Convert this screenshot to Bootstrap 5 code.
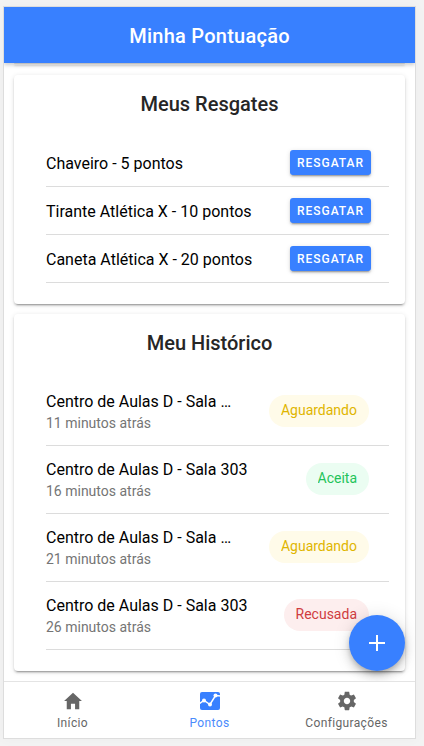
<!DOCTYPE html>
<html lang="pt-BR">
<head>
<meta charset="utf-8">
<meta name="viewport" content="width=device-width, initial-scale=1">
<title>Minha Pontuação</title>
<link href="https://cdn.jsdelivr.net/npm/bootstrap@5.3.0/dist/css/bootstrap.min.css" rel="stylesheet">
<style>
  :root { --brand: #3880ff; }
  body { font-family: Roboto, "Liberation Sans", sans-serif; background: #f3f3f3; color: #000; padding: 6px 8px 7px 3px; }
  .phone { border: 1px solid #ddd; background: #fff; box-shadow: 0 0 12px rgba(0,0,0,.03); }
  .topbar { height: 56px; padding-top: 2px; background: var(--brand); box-shadow: 0 2px 4px rgba(0,0,0,.2); z-index: 2; }
  .topbar h1 { font-size: 20px; font-weight: 500; letter-spacing: .0125em; }
  .panel, .panel-end { background: #fff; border-radius: 4px; box-shadow: 0 3px 1px -2px rgba(0,0,0,.2), 0 2px 2px 0 rgba(0,0,0,.14), 0 1px 5px 0 rgba(0,0,0,.12); }
  .panel-end { height: 1px; margin-bottom: 1px; border-radius: 0 0 4px 4px; background: #e2e2e2; }
  .pane { padding: 0 10px; }
  .stack { gap: 10px; }
  .panel { padding: 16px 16px 21px 32px; }
  .panel h2 { font-size: 20px; font-weight: 500; line-height: 26px; color: #262626; margin: 0 16px 22px 0; }
  .line { border-bottom: 1px solid #dcdcdc; }
  .prize { height: 48px; padding-right: 18px; font-size: 16px; }
  .prize span { padding-top: 2px; }
  .record { height: 68px; padding-right: 20px; gap: 32px; }
  .detail { padding-top: 1px; }
  .place { font-size: 16px; line-height: 22px; }
  .ago { font-size: 14px; line-height: 20px; color: #757575; }
  .redeem { height: 25px; padding: 1px 7px 0; border: 0; border-radius: 3px; background: var(--brand); color: #fff; font-size: 12px; font-weight: 500; line-height: 24px; letter-spacing: .08em; box-shadow: 0 3px 1px -2px rgba(0,0,0,.2), 0 2px 2px 0 rgba(0,0,0,.14), 0 1px 5px 0 rgba(0,0,0,.12); }
  .chip { height: 32px; padding: 0 12px; margin-bottom: 2px; border-radius: 16px; font-size: 14px; }
  .chip span { line-height: 15px; overflow: hidden; }
  .waiting { background: #fffbe9; color: #e0b500; }
  .accepted { background: #ebfdf2; color: #1fc45b; }
  .refused { background: #fdeeee; color: #d03c40; }
  .fab { width: 56px; height: 56px; right: 10px; bottom: 10px; background: var(--brand); box-shadow: 0 3px 5px -1px rgba(0,0,0,.2), 0 6px 10px 0 rgba(0,0,0,.14), 0 1px 18px 0 rgba(0,0,0,.12); }
  .tabs { height: 57px; border-top: 1px solid #e4e4e4; background: #fff; }
  .tabs a { color: #666; font-size: 12px; line-height: 16px; letter-spacing: .03em; gap: 3px; }
  .tabs a.on { color: #4a8bfc; }
</style>
</head>
<body class="vh-100 d-flex flex-column">
<div class="phone flex-fill d-flex flex-column overflow-hidden">
  <header class="topbar flex-shrink-0 d-flex align-items-center justify-content-center position-relative text-white">
    <h1 class="m-0">Minha Pontuação</h1>
  </header>
  <div class="position-relative flex-fill overflow-hidden">
    <main class="pane stack d-flex flex-column">
      <div class="panel-end"></div>
      <section class="panel">
        <h2 class="text-center">Meus Resgates</h2>
        <div class="prize line d-flex align-items-center justify-content-between"><span>Chaveiro - 5 pontos</span><button type="button" class="redeem">RESGATAR</button></div>
        <div class="prize line d-flex align-items-center justify-content-between"><span>Tirante Atlética X - 10 pontos</span><button type="button" class="redeem">RESGATAR</button></div>
        <div class="prize line d-flex align-items-center justify-content-between"><span>Caneta Atlética X - 20 pontos</span><button type="button" class="redeem">RESGATAR</button></div>
      </section>
      <section class="panel">
        <h2 class="text-center">Meu Histórico</h2>
        <div class="record line d-flex align-items-center justify-content-between">
          <div class="detail text-truncate"><div class="place text-truncate">Centro de Aulas D - Sala 303</div><div class="ago">11 minutos atrás</div></div>
          <div class="chip waiting d-flex align-items-center"><span>Aguardando</span></div>
        </div>
        <div class="record line d-flex align-items-center justify-content-between">
          <div class="detail text-truncate"><div class="place text-truncate">Centro de Aulas D - Sala 303</div><div class="ago">16 minutos atrás</div></div>
          <div class="chip accepted d-flex align-items-center"><span>Aceita</span></div>
        </div>
        <div class="record line d-flex align-items-center justify-content-between">
          <div class="detail text-truncate"><div class="place text-truncate">Centro de Aulas D - Sala 303</div><div class="ago">21 minutos atrás</div></div>
          <div class="chip waiting d-flex align-items-center"><span>Aguardando</span></div>
        </div>
        <div class="record line d-flex align-items-center justify-content-between">
          <div class="detail text-truncate"><div class="place text-truncate">Centro de Aulas D - Sala 303</div><div class="ago">26 minutos atrás</div></div>
          <div class="chip refused d-flex align-items-center"><span>Recusada</span></div>
        </div>
      </section>
    </main>
    <button type="button" class="fab position-absolute border-0 rounded-circle p-0 d-flex align-items-center justify-content-center" aria-label="Adicionar">
      <svg width="16" height="16" viewBox="0 0 16 16" fill="#fff" aria-hidden="true"><path d="M7 0h2v7h7v2H9v7H7V9H0V7h7z"/></svg>
    </button>
  </div>
  <nav class="tabs flex-shrink-0 row g-0">
    <a href="#inicio" class="col h-100 d-flex flex-column align-items-center justify-content-center text-decoration-none">
      <svg width="22" height="22" viewBox="0 0 512 512" fill="#666" aria-hidden="true"><path d="M208 448V320h96v128h97.6V256H464L256 64 48 256h62.4v192z"/></svg>
      <span>Início</span>
    </a>
    <a href="#pontos" class="on col h-100 d-flex flex-column align-items-center justify-content-center text-decoration-none" aria-current="page">
      <svg width="22" height="22" viewBox="0 0 22 22" aria-hidden="true"><rect x="1" y="2" width="20" height="18" rx="2" fill="#3880ff"/><path d="M0 14 5 10.500 11 14.500 16.500 5.500 22 6" fill="none" stroke="#fff" stroke-width="1.500"/><g fill="#fff"><circle cx="5" cy="10.500" r="2"/><circle cx="11" cy="14.500" r="2"/><circle cx="16.500" cy="5.500" r="2"/></g></svg>
      <span>Pontos</span>
    </a>
    <a href="#configuracoes" class="col h-100 d-flex flex-column align-items-center justify-content-center text-decoration-none">
      <svg width="22" height="22" viewBox="0 0 24 24" fill="#666" aria-hidden="true"><path d="M19.430 12.980c.04-.32.07-.64.07-.98s-.03-.66-.07-.98l2.110-1.650c.19-.15.24-.42.12-.64l-2-3.460c-.12-.22-.39-.3-.61-.22l-2.490 1c-.52-.4-1.080-.73-1.690-.98l-.38-2.650C14.460 2.180 14.250 2 14 2h-4c-.25 0-.46.18-.49.42l-.38 2.650c-.61.25-1.170.59-1.690.98l-2.490-1c-.23-.09-.49 0-.61.22l-2 3.460c-.13.22-.07.49.12.64l2.110 1.650c-.04.32-.07.65-.07.98s.03.66.07.98l-2.110 1.650c-.19.15-.24.42-.12.64l2 3.460c.12.22.39.3.61.22l2.490-1c.52.4 1.080.73 1.690.98l.38 2.650c.03.24.24.42.49.42h4c.25 0 .46-.18.49-.42l.38-2.650c.61-.25 1.170-.59 1.690-.98l2.490 1c.23.09.49 0 .61-.22l2-3.460c.12-.22.07-.49-.12-.64l-2.110-1.650zM12 15.500c-1.930 0-3.500-1.570-3.500-3.500s1.570-3.500 3.500-3.500 3.500 1.570 3.500 3.500-1.570 3.500-3.500 3.500z"/></svg>
      <span>Configurações</span>
    </a>
  </nav>
</div>
<script src="https://cdn.jsdelivr.net/npm/bootstrap@5.3.0/dist/js/bootstrap.bundle.min.js"></script>
</body>
</html>
